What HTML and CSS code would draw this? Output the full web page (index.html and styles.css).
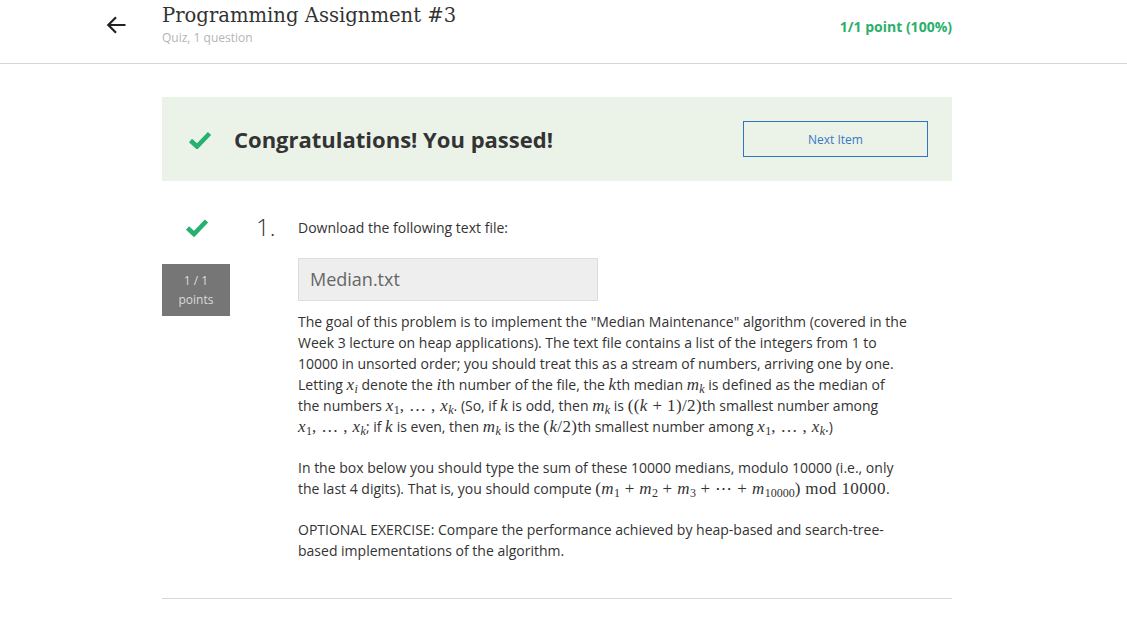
FILE: index.html
```html
<!DOCTYPE html>
<html>
<head>
<meta charset="utf-8">
<link rel="stylesheet" href="styles.css">
</head>
<body>
<header class="topbar">
  <div class="topbar-inner">
    <svg class="back" width="20" height="18" viewBox="0 0 20 18"><path d="M19.5 9H2.5M10 1.3L2.3 9 10 16.7" fill="none" stroke="#222" stroke-width="2.2"/></svg>
    <div class="titles">
      <div class="title">Programming Assignment #3</div>
      <div class="subtitle">Quiz, 1 question</div>
    </div>
    <div class="score">1/1 point (100%)</div>
  </div>
</header>
<main class="content">
  <section class="banner">
    <svg class="check big" width="24" height="18" viewBox="0 0 24 18"><path d="M2.5 9.5l6.5 6 12.5-13" fill="none" stroke="#25b16f" stroke-width="4.6"/></svg>
    <h2 class="banner-text">Congratulations! You passed!</h2>
    <button class="next">Next Item</button>
  </section>
  <section class="question">
    <div class="qside">
      <svg class="check" width="24" height="19" viewBox="0 0 24 19"><path d="M2.5 10l6.5 6 12.5-13" fill="none" stroke="#25b16f" stroke-width="4.6"/></svg>
      <div class="points">1 / 1<br>points</div>
    </div>
    <div class="qnum">1.</div>
    <div class="qbody">
      <p class="lead">Download the following text file:</p>
      <div class="file">Median.txt</div>
      <p>The goal of this problem is to implement the "Median Maintenance" algorithm (covered in the Week 3 lecture on heap applications). The text file contains a list of the integers from 1 to 10000 in unsorted order; you should treat this as a stream of numbers, arriving one by one. Letting <span class="m"><i>x</i><sub><i>i</i></sub></span> denote the <span class="m"><i>i</i></span>th number of the file, the <span class="m"><i>k</i></span>th median <span class="m"><i>m</i><sub><i>k</i></sub></span> is defined as the median of the numbers <span class="m"><i>x</i><sub>1</sub>, … , <i>x</i><sub><i>k</i></sub></span>. (So, if <span class="m"><i>k</i></span> is odd, then <span class="m"><i>m</i><sub><i>k</i></sub></span> is <span class="m">((<i>k</i> + 1)/2)</span>th smallest number among <span class="m"><i>x</i><sub>1</sub>, … , <i>x</i><sub><i>k</i></sub></span>; if <span class="m"><i>k</i></span> is even, then <span class="m"><i>m</i><sub><i>k</i></sub></span> is the <span class="m">(<i>k</i>/2)</span>th smallest number among <span class="m"><i>x</i><sub>1</sub>, … , <i>x</i><sub><i>k</i></sub></span>.)</p>
      <p>In the box below you should type the sum of these 10000 medians, modulo 10000 (i.e., only the last 4 digits). That is, you should compute <span class="m">(<i>m</i><sub>1</sub> + <i>m</i><sub>2</sub> + <i>m</i><sub>3</sub> + ⋯ + <i>m</i><sub>10000</sub>) mod 10000</span>.</p>
      <p>OPTIONAL EXERCISE: Compare the performance achieved by heap-based and search-tree-based implementations of the algorithm.</p>
    </div>
  </section>
  <hr class="rule">
</main>
</body>
</html>
```
FILE: styles.css
```css
* { box-sizing: border-box; }
html, body { margin: 0; padding: 0; background: #fff; }
body { font-family: "Open Sans", "Liberation Sans", sans-serif; color: #333; }

.topbar { height: 64px; border-bottom: 1px solid #d6d6d6; }
.topbar-inner { display: flex; align-items: flex-start; width: 952px; padding-left: 106px; }
.back { margin-top: 16px; margin-right: 36px; flex: none; }
.titles { flex: 1; }
.title { font-family: "DejaVu Serif", "Liberation Serif", serif; font-size: 19.6px; line-height: 26px; margin-top: 3px; color: #333; }
.subtitle { font-size: 12px; line-height: 16px; color: #b5b5b5; margin-top: 1px; }
.score { font-size: 14px; font-weight: 700; color: #2bb06c; margin-top: 17px; line-height: 20px; }

.content { width: 790px; margin-left: 162px; }

.banner { margin-top: 33px; height: 84px; background: #ebf3e8; display: flex; align-items: center; padding: 0 24px 0 26px; }
.banner .check { margin-right: 22px; margin-top: 1px; }
.banner-text { flex: 1; margin: 0; font-size: 22px; font-weight: 700; color: #333; line-height: 30px; }
.next { width: 185px; height: 36px; border: 1.5px solid #2f73c4; background: transparent; color: #3a78c6; font-family: "Open Sans", "Liberation Sans", sans-serif; font-size: 12px; padding: 0; }

.question { display: flex; margin-top: 35px; }
.qside { width: 68px; display: flex; flex-direction: column; align-items: center; padding-top: 2px; }
.qside .check { margin-left: 1px; }
.points { margin-top: 27px; width: 68px; height: 52px; background: #767676; color: #dadada; font-size: 12px; line-height: 19px; text-align: center; padding-top: 7px; }
.qnum { width: 68px; padding-left: 26px; font-size: 24px; font-weight: 300; line-height: 30px; margin-top: -4px; color: #333; }
.qbody { width: 611px; font-size: 14px; line-height: 21px; color: #333; }
.qbody p { margin: 0 0 20px; }
.qbody p.lead { margin: 0 0 18px; line-height: 24px; }
.file { width: 300px; height: 43px; background: #eee; border: 1px solid #ddd; font-size: 18px; color: #666; padding-left: 11px; line-height: 41px; margin-bottom: 10px; }
.m { font-family: "Liberation Serif", "DejaVu Serif", serif; font-size: 17px; letter-spacing: 0.4px; white-space: nowrap; line-height: 1; }
.m sub { font-size: 12px; line-height: 1; letter-spacing: 0; vertical-align: -3px; }

.rule { border: 0; border-top: 1px solid #d8d8d8; margin: 17px 0 0; }
```
